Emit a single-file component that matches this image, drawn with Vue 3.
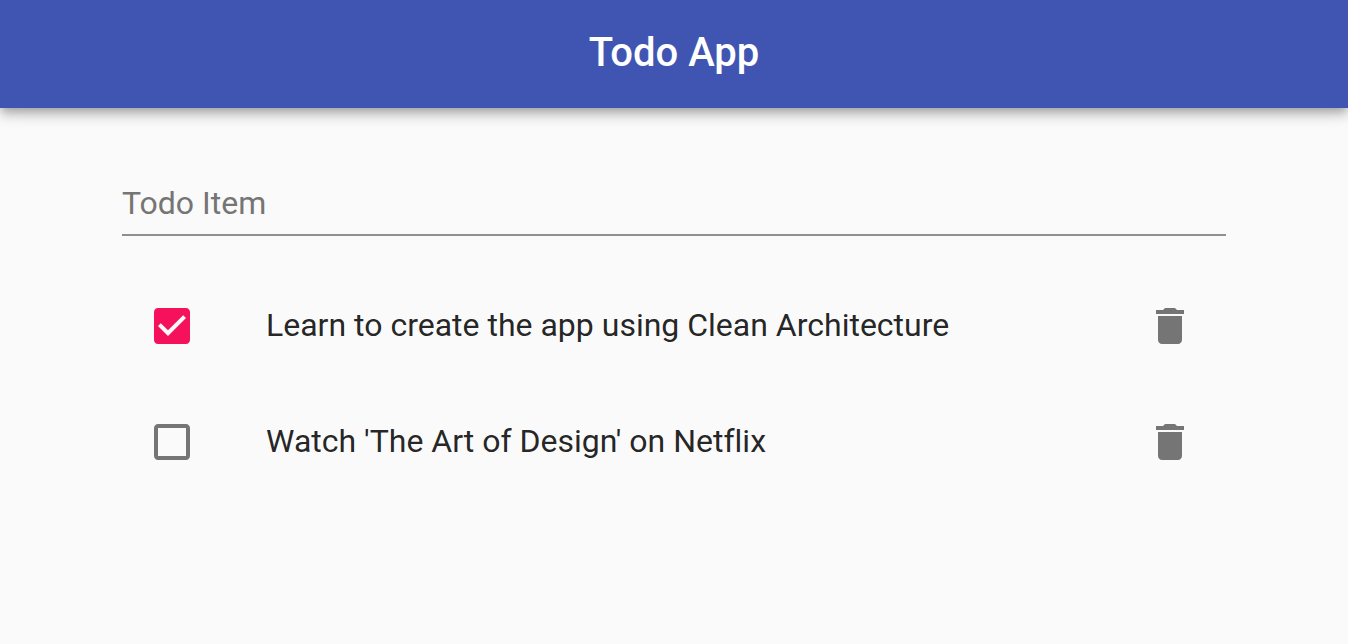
<script setup>
import { ref } from 'vue'

const draft = ref('')
const todos = ref([
  { id: 1, text: 'Learn to create the app using Clean Architecture', done: true },
  { id: 2, text: "Watch 'The Art of Design' on Netflix", done: false },
])

function add() {
  const text = draft.value.trim()
  if (!text) return
  todos.value.push({ id: Date.now(), text, done: false })
  draft.value = ''
}

function remove(id) {
  todos.value = todos.value.filter((todo) => todo.id !== id)
}
</script>

<template>
  <div class="app">
    <header class="bar">
      <h1 class="title">Todo App</h1>
    </header>
    <main class="content">
      <form @submit.prevent="add">
        <input v-model="draft" class="field" type="text" placeholder="Todo Item" aria-label="Todo Item" />
      </form>
      <ul class="list">
        <li v-for="todo in todos" :key="todo.id" class="row">
          <span class="check">
            <input :id="`todo-${todo.id}`" v-model="todo.done" class="box" type="checkbox" />
            <svg v-if="todo.done" class="icon" viewBox="0 0 24 24" aria-hidden="true">
              <path class="on" d="M19 3H5c-1.11 0-2 .9-2 2v14c0 1.1.89 2 2 2h14c1.11 0 2-.9 2-2V5c0-1.1-.89-2-2-2zm-9 14l-5-5 1.41-1.41L10 14.17l7.59-7.59L19 8l-9 9z" />
            </svg>
            <svg v-else class="icon" viewBox="0 0 24 24" aria-hidden="true">
              <path class="off" d="M19 5v14H5V5h14m0-2H5c-1.1 0-2 .9-2 2v14c0 1.1.9 2 2 2h14c1.1 0 2-.9 2-2V5c0-1.1-.9-2-2-2z" />
            </svg>
          </span>
          <label class="text" :for="`todo-${todo.id}`">{{ todo.text }}</label>
          <button class="delete" type="button" aria-label="Delete" @click="remove(todo.id)">
            <svg class="icon" viewBox="0 0 24 24" aria-hidden="true">
              <path class="off" d="M6 19c0 1.1.9 2 2 2h8c1.1 0 2-.9 2-2V7H6v12zM19 4h-3.5l-1-1h-5l-1 1H5v2h14V4z" />
            </svg>
          </button>
        </li>
      </ul>
    </main>
  </div>
</template>

<style>
body {
  background: #fafafa;
}
</style>

<style scoped>
.app {
  font-family: Roboto, sans-serif;
  font-variant-ligatures: none;
  color: rgba(0, 0, 0, 0.87);
}
.bar {
  display: flex;
  justify-content: center;
  padding: 28px 48px 30px;
  background: #4055b2;
  box-shadow: 0 4px 8px -2px rgba(0, 0, 0, 0.2), 0 8px 10px rgba(0, 0, 0, 0.14), 0 2px 20px rgba(0, 0, 0, 0.12);
}
.title {
  margin: 0;
  font-size: 40px;
  line-height: 50px;
  font-weight: 500;
  color: #fff;
}
.content {
  padding: 64px 122px;
}
.field {
  display: block;
  box-sizing: border-box;
  width: 100%;
  height: 64px;
  padding: 0;
  border: 0;
  border-bottom: 2px solid #8f8f8f;
  background: transparent;
  font: 400 32px Roboto, sans-serif;
  color: inherit;
  outline: none;
}
.field::placeholder {
  color: #757575;
  opacity: 1;
}
.list {
  margin: 0;
  padding: 32px 0 0;
  list-style: none;
}
.row {
  display: flex;
  align-items: center;
  padding: 10px 8px;
}
.check {
  position: relative;
  display: flex;
  flex: none;
  padding: 18px;
}
.box {
  position: absolute;
  inset: 0;
  width: 100%;
  height: 100%;
  margin: 0;
  opacity: 0;
  cursor: pointer;
}
.icon {
  display: block;
  width: 48px;
  height: 48px;
}
.on {
  fill: #f5115c;
}
.off {
  fill: #757575;
}
.text {
  flex: 1;
  padding: 0 0 2px 52px;
  font-size: 32px;
  line-height: 48px;
}
.delete {
  flex: none;
  padding: 24px;
  border: 0;
  background: transparent;
  cursor: pointer;
}
</style>
